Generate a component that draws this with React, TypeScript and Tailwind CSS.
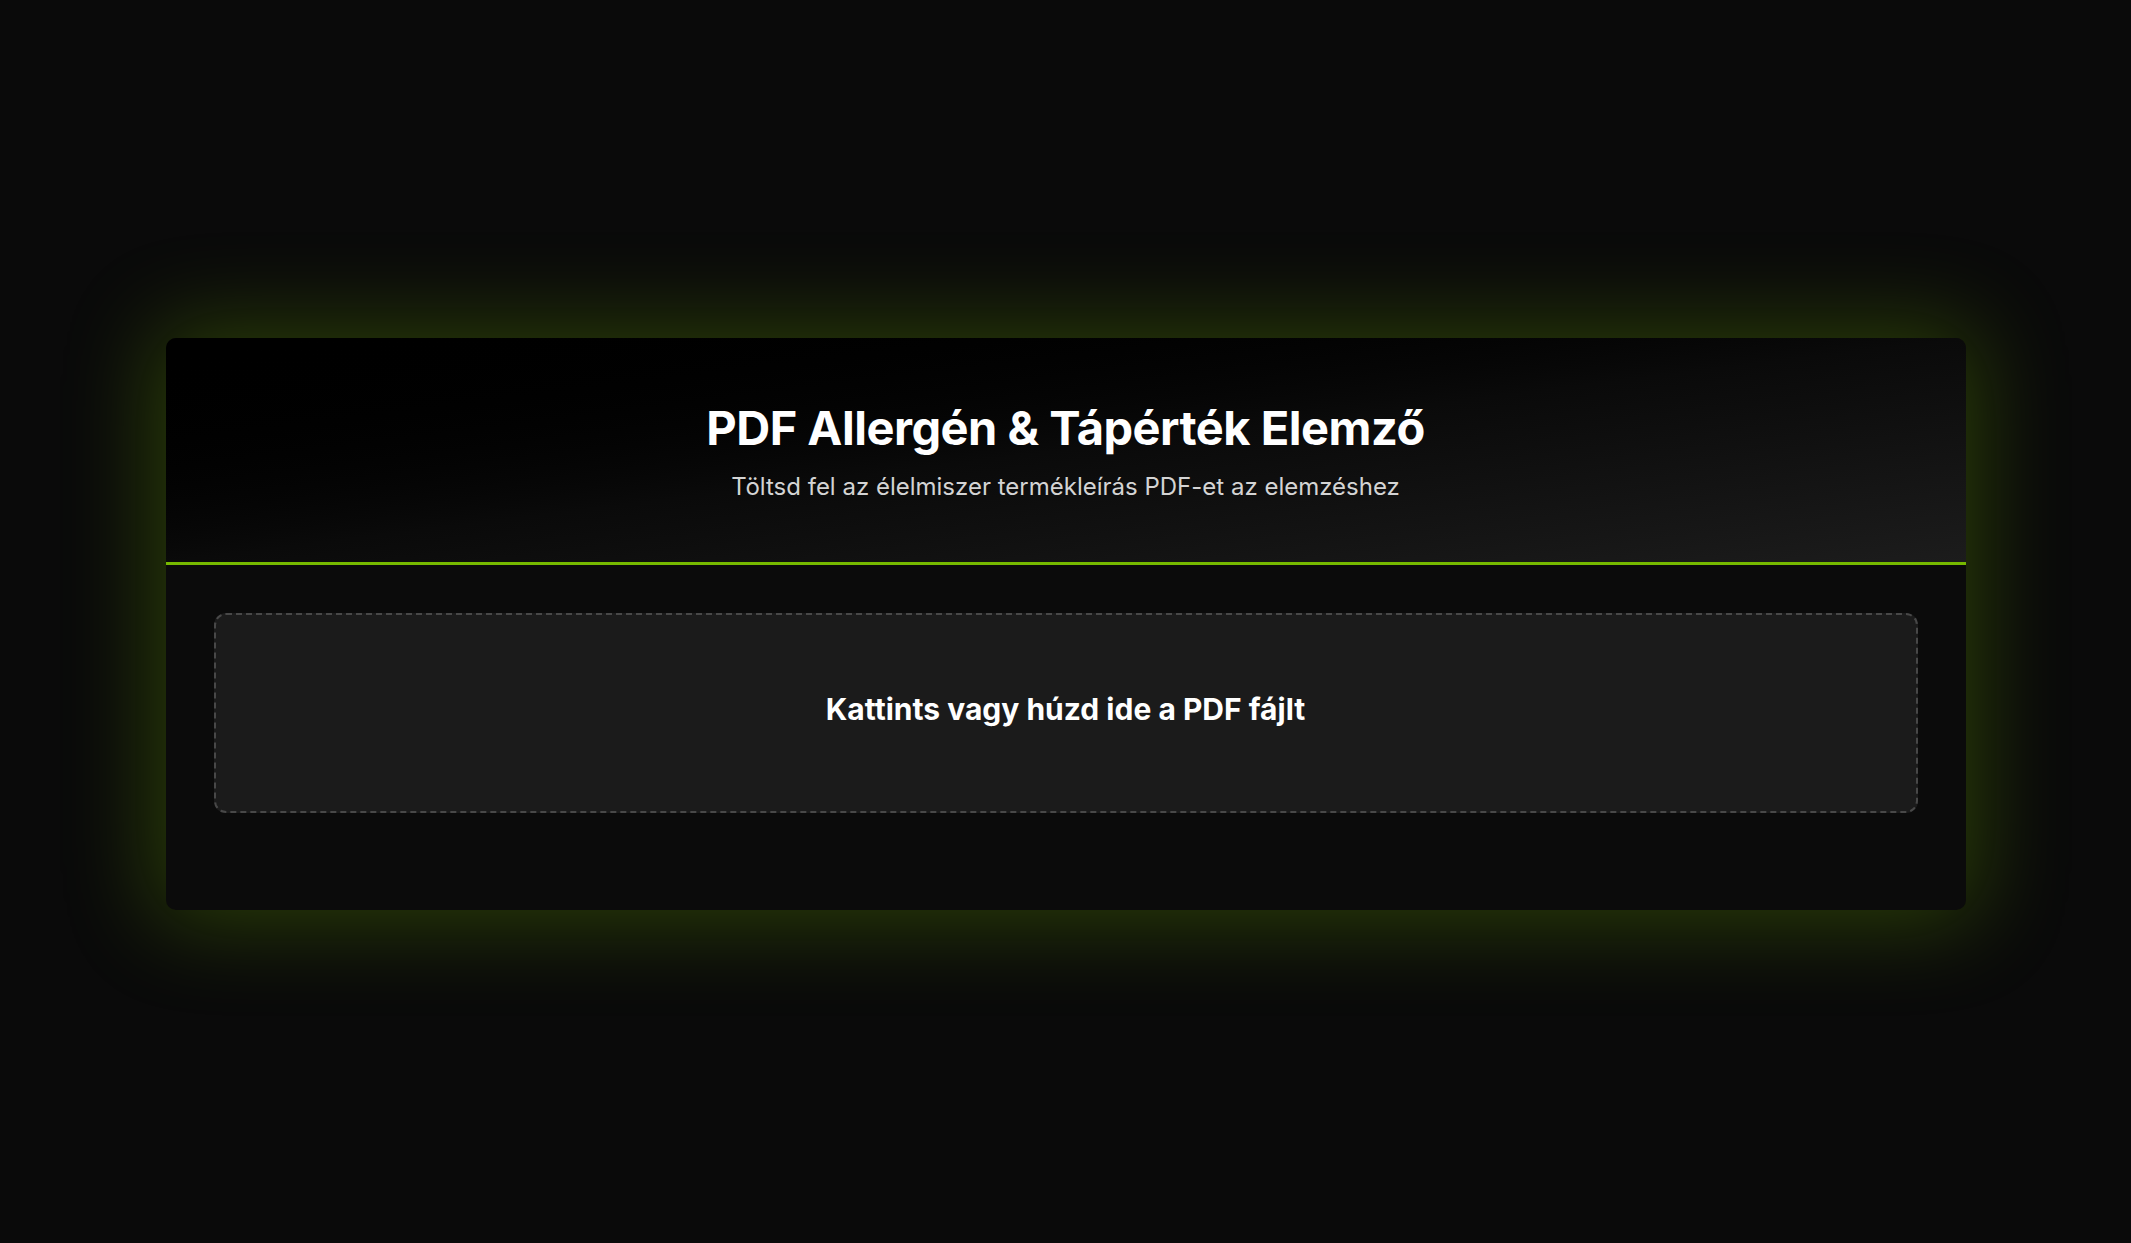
const App = () => {
    return (
        <div className="min-h-screen w-full bg-[#0a0a0a] flex items-center justify-center px-[165px] pt-[45px] pb-[40px] font-['Inter','Noto_Sans',sans-serif]">
            <div className="w-full max-w-[1800px] rounded-[10px] overflow-hidden bg-[#0b0b0b] shadow-[0_0_90px_12px_rgba(118,185,0,0.3)]">
                <div className="bg-gradient-to-br from-[#000000] via-[#0a0a0a] to-[#1c1c1c] border-b-[3px] border-[#76b900] pt-[61px] pb-[60px] flex flex-col items-center">
                    <h1 className="text-[47px] leading-[58px] font-bold text-white tracking-[-0.5px]">PDF Allergén &amp; Tápérték Elemző</h1>
                    <p className="mt-[15px] text-[24px] leading-[30px] text-[#d4d4d4]">Töltsd fel az élelmiszer termékleírás PDF-et az elemzéshez</p>
                </div>
                <div className="px-[48px] pt-[48px] pb-[97px]">
                    <div className="h-[200px] rounded-[12px] border-2 border-dashed border-[#484848] bg-[#1b1b1b] flex items-center justify-center cursor-pointer">
                        <span className="mb-[8px] text-[30px] font-bold text-white">Kattints vagy húzd ide a PDF fájlt</span>
                    </div>
                </div>
            </div>
        </div>
    );
}

export default App;
